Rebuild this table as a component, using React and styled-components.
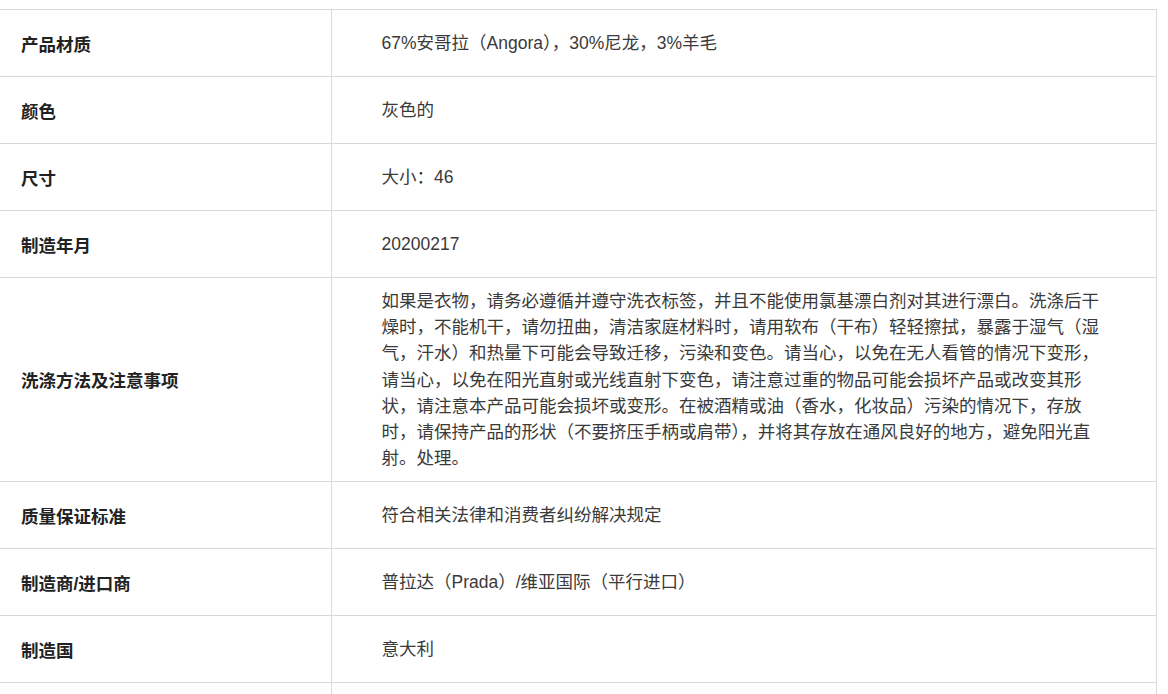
import React from 'react'
import styled, { createGlobalStyle } from 'styled-components'

const GlobalStyles = createGlobalStyle`
  html, body {
    margin: 0;
    padding: 0;
    background: #fff;
  }
  body {
    font-family: 'Liberation Sans', 'Noto Sans CJK SC', sans-serif;
    color: #333;
  }
`

const Page = styled.div`
  padding-top: 9px;
  width: 1157px;
`

const InfoTable = styled.table`
  width: 100%;
  border-collapse: collapse;
  table-layout: fixed;
  border-top: 1px solid #d9d9d9;
  border-right: 1px solid #d9d9d9;
`

const Row = styled.tr`
  border-bottom: 1px solid #d9d9d9;
`

const Label = styled.th`
  width: 331px;
  height: 67px;
  padding: 0 21px;
  text-align: left;
  vertical-align: middle;
  font-size: 17.5px;
  font-weight: 700;
  color: #222;
  border-right: 1px solid #d9d9d9;
  box-sizing: border-box;
`

const Value = styled.td`
  height: 67px;
  padding: 10px 53px 10px 50px;
  vertical-align: middle;
  font-size: 17.5px;
  line-height: 26.2px;
  color: #3a3a3a;
  box-sizing: border-box;
`

const rows = [
  ['产品材质', '67%安哥拉（Angora），30%尼龙，3%羊毛'],
  ['颜色', '灰色的'],
  ['尺寸', '大小：46'],
  ['制造年月', '20200217'],
  [
    '洗涤方法及注意事项',
    '如果是衣物，请务必遵循并遵守洗衣标签，并且不能使用氯基漂白剂对其进行漂白。洗涤后干燥时，不能机干，请勿扭曲，清洁家庭材料时，请用软布（干布）轻轻擦拭，暴露于湿气（湿气，汗水）和热量下可能会导致迁移，污染和变色。请当心，以免在无人看管的情况下变形，请当心，以免在阳光直射或光线直射下变色，请注意过重的物品可能会损坏产品或改变其形状，请注意本产品可能会损坏或变形。在被酒精或油（香水，化妆品）污染的情况下，存放时，请保持产品的形状（不要挤压手柄或肩带），并将其存放在通风良好的地方，避免阳光直射。处理。',
  ],
  ['质量保证标准', '符合相关法律和消费者纠纷解决规定'],
  ['制造商/进口商', '普拉达（Prada）/维亚国际（平行进口）'],
  ['制造国', '意大利'],
  ['', ''],
]

const App = () => (
  <>
    <GlobalStyles />
    <Page>
      <InfoTable>
        <tbody>
          {rows.map(([label, value], i) => (
            <Row key={i}>
              <Label>{label}</Label>
              <Value>{value}</Value>
            </Row>
          ))}
        </tbody>
      </InfoTable>
    </Page>
  </>
)

export default App
